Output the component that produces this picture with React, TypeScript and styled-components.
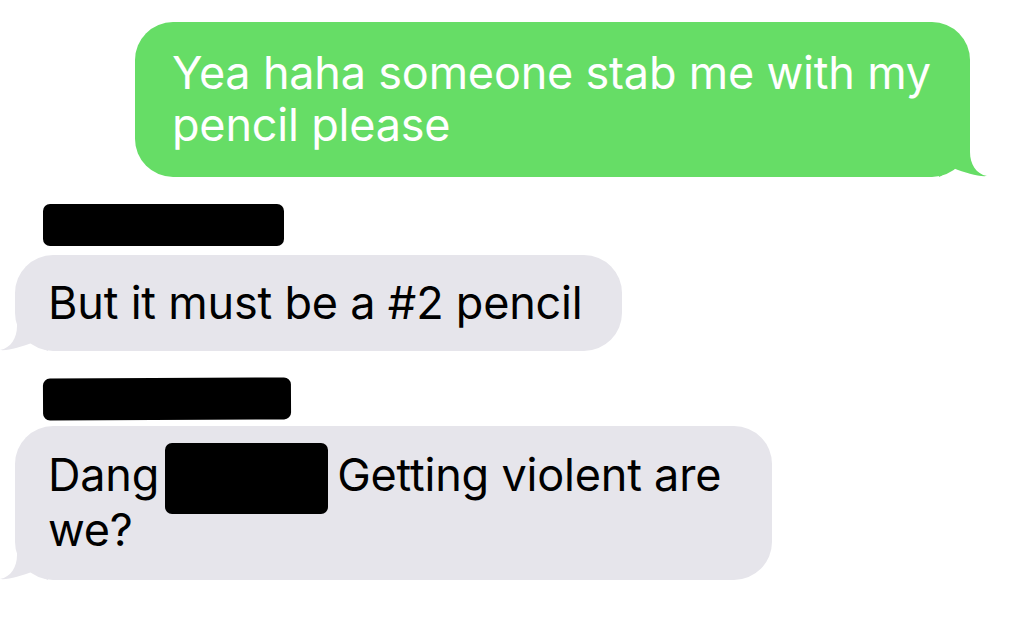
import React from "react";
import styled, { createGlobalStyle } from "styled-components";

const Global = createGlobalStyle`
  html, body { margin: 0; padding: 0; background: #ffffff; }
  body { font-family: Inter, "Liberation Sans", Arial, sans-serif; }
`;

const Page = styled.div`
  width: 1026px;
  height: 624px;
  box-sizing: border-box;
  padding-top: 22px;
  display: flex;
  flex-direction: column;
  overflow: hidden;
`;

const OutgoingRow = styled.div`
  display: flex;
  justify-content: flex-end;
  padding-right: 56px;
`;

const IncomingGroup = styled.div<{ $top: number }>`
  display: flex;
  flex-direction: column;
  align-items: flex-start;
  padding-left: 15px;
  margin-top: ${(p) => p.$top}px;
`;

const BubbleBase = styled.div<{ $width: number; $height: number; $padTop: number; $lh: number }>`
  position: relative;
  box-sizing: border-box;
  width: ${(p) => p.$width}px;
  height: ${(p) => p.$height}px;
  padding-top: ${(p) => p.$padTop}px;
  border-radius: 38px;
  font-size: 45px;
  line-height: ${(p) => p.$lh}px;
  letter-spacing: -0.2px;
`;

const GreenBubble = styled(BubbleBase)`
  background: #66dd66;
  color: #ffffff;
  padding-left: 37px;
  padding-right: 30px;
`;

const GreyBubble = styled(BubbleBase)`
  background: #e6e5eb;
  color: #000000;
  padding-left: 33px;
  padding-right: 30px;
`;

const Tail = styled.svg<{ $side: "left" | "right" }>`
  position: absolute;
  bottom: -1px;
  width: 48px;
  height: 46px;
  ${(p) => (p.$side === "right" ? "right: -17px;" : "left: -15px;")}
`;

const NameRedaction = styled.div<{ $width: number; $tilt?: number }>`
  margin-left: 28px;
  width: ${(p) => p.$width}px;
  height: 42px;
  background: #000000;
  border-radius: 7px;
  transform: rotate(${(p) => p.$tilt ?? 0}deg);
  margin-bottom: ${(p) => (p.$tilt ? 6 : 9)}px;
`;

const InlineRedaction = styled.span`
  display: inline-block;
  width: 163px;
  height: 71px;
  background: #000000;
  border-radius: 7px;
  margin: -30px 9px -23px 6px;
  vertical-align: baseline;
`;

const GreenTailPath = () => (
  <Tail $side="right" viewBox="0 0 48 46">
    <path
      d="M 31 0 L 31 20 C 31 32 37 42 48 44 C 40 45 27 41 14 36 C 8 41 2 44 0 45 L 0 0 Z"
      fill="#66dd66"
    />
  </Tail>
);

const GreyTailPath = () => (
  <Tail $side="left" viewBox="0 0 48 46">
    <path
      d="M 17 0 L 17 20 C 17 32 11 42 0 44 C 8 45 21 41 34 36 C 40 41 46 44 48 45 L 48 0 Z"
      fill="#e6e5eb"
    />
  </Tail>
);

export default function App() {
  return (
    <>
      <Global />
      <Page>
        <OutgoingRow>
          <GreenBubble $width={835} $height={155} $padTop={25} $lh={52}>
            Yea haha someone stab me with my pencil please
            <GreenTailPath />
          </GreenBubble>
        </OutgoingRow>

        <IncomingGroup $top={27}>
          <NameRedaction $width={241} />
          <GreyBubble $width={607} $height={96} $padTop={21} $lh={53}>
            But it must be a #2 pencil
            <GreyTailPath />
          </GreyBubble>
        </IncomingGroup>

        <IncomingGroup $top={27}>
          <NameRedaction $width={248} $tilt={-0.3} />
          <GreyBubble $width={757} $height={154} $padTop={21} $lh={55}>
            Dang<InlineRedaction />Getting violent are we?
            <GreyTailPath />
          </GreyBubble>
        </IncomingGroup>
      </Page>
    </>
  );
}
